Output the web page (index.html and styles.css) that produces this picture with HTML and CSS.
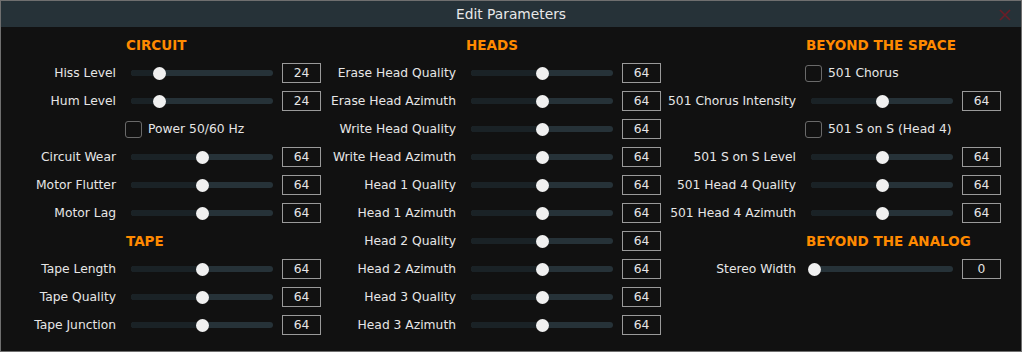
FILE: index.html
```html
<!DOCTYPE html>
<html>
<head>
<meta charset="utf-8">
<link rel="stylesheet" href="styles.css">
</head>
<body>
<div class="window">
  <div class="titlebar">
    <span class="title">Edit Parameters</span>
    <svg class="close" width="12" height="12" viewBox="0 0 12 12"><path d="M1 1L11 11M11 1L1 11" stroke="#6b1d26" stroke-width="1.6"/></svg>
  </div>
  <div class="content">
    <div class="col">
      <div class="heading">CIRCUIT</div>
      <div class="row"><span class="label">Hiss Level</span><div class="slider"><div class="fill" style="width:28.6px"></div><div class="thumb" style="left:28.6px"></div></div><div class="value">24</div></div>
      <div class="row"><span class="label">Hum Level</span><div class="slider"><div class="fill" style="width:28.6px"></div><div class="thumb" style="left:28.6px"></div></div><div class="value">24</div></div>
      <div class="check"><span class="box"></span><span>Power 50/60 Hz</span></div>
      <div class="row"><span class="label">Circuit Wear</span><div class="slider"><div class="fill" style="width:71.3px"></div><div class="thumb" style="left:71.3px"></div></div><div class="value">64</div></div>
      <div class="row"><span class="label">Motor Flutter</span><div class="slider"><div class="fill" style="width:71.3px"></div><div class="thumb" style="left:71.3px"></div></div><div class="value">64</div></div>
      <div class="row"><span class="label">Motor Lag</span><div class="slider"><div class="fill" style="width:71.3px"></div><div class="thumb" style="left:71.3px"></div></div><div class="value">64</div></div>
      <div class="heading">TAPE</div>
      <div class="row"><span class="label">Tape Length</span><div class="slider"><div class="fill" style="width:71.3px"></div><div class="thumb" style="left:71.3px"></div></div><div class="value">64</div></div>
      <div class="row"><span class="label">Tape Quality</span><div class="slider"><div class="fill" style="width:71.3px"></div><div class="thumb" style="left:71.3px"></div></div><div class="value">64</div></div>
      <div class="row"><span class="label">Tape Junction</span><div class="slider"><div class="fill" style="width:71.3px"></div><div class="thumb" style="left:71.3px"></div></div><div class="value">64</div></div>
    </div>
    <div class="col">
      <div class="heading">HEADS</div>
      <div class="row"><span class="label">Erase Head Quality</span><div class="slider"><div class="fill" style="width:71.3px"></div><div class="thumb" style="left:71.3px"></div></div><div class="value">64</div></div>
      <div class="row"><span class="label">Erase Head Azimuth</span><div class="slider"><div class="fill" style="width:71.3px"></div><div class="thumb" style="left:71.3px"></div></div><div class="value">64</div></div>
      <div class="row"><span class="label">Write Head Quality</span><div class="slider"><div class="fill" style="width:71.3px"></div><div class="thumb" style="left:71.3px"></div></div><div class="value">64</div></div>
      <div class="row"><span class="label">Write Head Azimuth</span><div class="slider"><div class="fill" style="width:71.3px"></div><div class="thumb" style="left:71.3px"></div></div><div class="value">64</div></div>
      <div class="row"><span class="label">Head 1 Quality</span><div class="slider"><div class="fill" style="width:71.3px"></div><div class="thumb" style="left:71.3px"></div></div><div class="value">64</div></div>
      <div class="row"><span class="label">Head 1 Azimuth</span><div class="slider"><div class="fill" style="width:71.3px"></div><div class="thumb" style="left:71.3px"></div></div><div class="value">64</div></div>
      <div class="row"><span class="label">Head 2 Quality</span><div class="slider"><div class="fill" style="width:71.3px"></div><div class="thumb" style="left:71.3px"></div></div><div class="value">64</div></div>
      <div class="row"><span class="label">Head 2 Azimuth</span><div class="slider"><div class="fill" style="width:71.3px"></div><div class="thumb" style="left:71.3px"></div></div><div class="value">64</div></div>
      <div class="row"><span class="label">Head 3 Quality</span><div class="slider"><div class="fill" style="width:71.3px"></div><div class="thumb" style="left:71.3px"></div></div><div class="value">64</div></div>
      <div class="row"><span class="label">Head 3 Azimuth</span><div class="slider"><div class="fill" style="width:71.3px"></div><div class="thumb" style="left:71.3px"></div></div><div class="value">64</div></div>
    </div>
    <div class="col">
      <div class="heading">BEYOND THE SPACE</div>
      <div class="check"><span class="box"></span><span>501 Chorus</span></div>
      <div class="row"><span class="label">501 Chorus Intensity</span><div class="slider"><div class="fill" style="width:71.3px"></div><div class="thumb" style="left:71.3px"></div></div><div class="value">64</div></div>
      <div class="check"><span class="box"></span><span>501 S on S (Head 4)</span></div>
      <div class="row"><span class="label">501 S on S Level</span><div class="slider"><div class="fill" style="width:71.3px"></div><div class="thumb" style="left:71.3px"></div></div><div class="value">64</div></div>
      <div class="row"><span class="label">501 Head 4 Quality</span><div class="slider"><div class="fill" style="width:71.3px"></div><div class="thumb" style="left:71.3px"></div></div><div class="value">64</div></div>
      <div class="row"><span class="label">501 Head 4 Azimuth</span><div class="slider"><div class="fill" style="width:71.3px"></div><div class="thumb" style="left:71.3px"></div></div><div class="value">64</div></div>
      <div class="heading">BEYOND THE ANALOG</div>
      <div class="row"><span class="label">Stereo Width</span><div class="slider"><div class="fill" style="width:3px"></div><div class="thumb" style="left:3px"></div></div><div class="value">0</div></div>
    </div>
  </div>
</div>
</body>
</html>
```

FILE: styles.css
```css
html, body {
  margin: 0;
  padding: 0;
  background: #111111;
}
body {
  font-family: "DejaVu Sans", Verdana, sans-serif;
  font-size: 12.3px;
  color: #e6e6e6;
}
.window {
  width: 1022px;
  height: 352px;
  box-sizing: border-box;
  border: 1px solid #6f6f6f;
  background: #111111;
  display: flex;
  flex-direction: column;
}
.titlebar {
  height: 26px;
  background: #263238;
  position: relative;
  display: flex;
  align-items: center;
  justify-content: center;
}
.title {
  font-size: 13.8px;
  color: #e8e8e8;
}
.close {
  position: absolute;
  right: 10px;
  top: 8px;
}
.content {
  display: grid;
  grid-template-columns: 340px 340px 340px;
  padding-top: 4px;
}
.col {
  display: flex;
  flex-direction: column;
}
.heading {
  height: 28px;
  line-height: 28px;
  padding-left: 125px;
  color: #ff8a00;
  font-weight: bold;
  font-size: 13.5px;
  white-space: nowrap;
}
.row {
  height: 28px;
  display: flex;
  align-items: center;
}
.label {
  width: 115px;
  flex-shrink: 0;
  display: flex;
  justify-content: flex-end;
  white-space: nowrap;
}
.slider {
  margin-left: 15px;
  width: 142px;
  flex-shrink: 0;
  height: 6px;
  border-radius: 3px;
  background: #263238;
  position: relative;
}
.fill {
  height: 6px;
  border-radius: 3px 0 0 3px;
  background: #1a2226;
}
.thumb {
  position: absolute;
  top: -3.5px;
  width: 13px;
  height: 13px;
  margin-left: -6.5px;
  border-radius: 50%;
  background: #f0f0f0;
}
.value {
  margin-left: 9px;
  width: 39px;
  flex-shrink: 0;
  height: 20px;
  box-sizing: border-box;
  border: 1px solid #9a9a9a;
  text-align: center;
  line-height: 18px;
}
.check {
  height: 28px;
  display: flex;
  align-items: center;
  padding-left: 124px;
  gap: 6px;
  white-space: nowrap;
}
.box {
  width: 15px;
  height: 15px;
  flex-shrink: 0;
  border: 1px solid #6a6a6a;
  border-radius: 3px;
  background: #111111;
}
```
